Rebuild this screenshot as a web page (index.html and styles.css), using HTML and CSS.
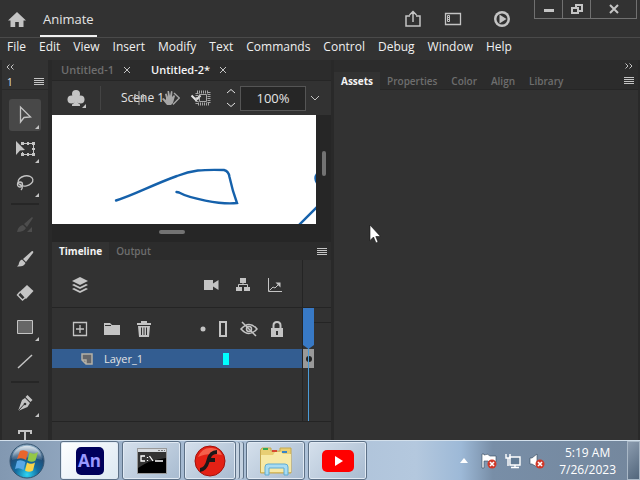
FILE: index.html
```html
<!DOCTYPE html>
<html lang="en">
<head>
    <meta charset="UTF-8">
    <meta name="viewport" content="width=device-width, initial-scale=1.0">
    <title>Animate</title>
    <link rel="stylesheet" href="styles.css">
</head>
<body>
    <header class="titlebar">
        <button class="home" aria-label="Home">
            <svg width="18" height="16" viewBox="0 0 18 16"><path fill="currentColor" d="M9 0L18 8.5H15.5V15H10.8V10H7.2V15H2.5V8.5H0z"/></svg>
        </button>
        <h1 class="appName">Animate</h1>
        <div class="actions">
            <button aria-label="Share">
                <svg width="18" height="18" viewBox="0 0 18 18" fill="none" stroke="currentColor" stroke-width="1.5"><path d="M6 6H2V16H16V6H12M9 12V2M5.5 5L9 1.5L12.5 5"/></svg>
            </button>
            <button aria-label="Workspace">
                <svg width="18" height="14" viewBox="0 0 18 14" fill="none" stroke="currentColor"><path stroke-width="1.3" d="M1.500 1.500H16.500V12.500H1.500z"/><path d="M3.500 3.500H5.500V5.500H3.500zM3.500 5.500H5.500V7.500H3.500zM3.500 7.500H5.500V9.500H3.500z"/></svg>
            </button>
            <button class="play" aria-label="Test movie">
                <svg width="18" height="18" viewBox="0 0 18 18"><circle cx="9" cy="9" r="8" fill="currentColor"/><circle cx="9" cy="9" r="5.500" fill="#323232"/><path fill="currentColor" d="M6.500 4.500L13.500 9L6.500 13.500z"/></svg>
            </button>
        </div>
        <div class="winButtons">
            <button aria-label="Minimize"><svg width="12" height="12" viewBox="0 0 12 12"><path fill="currentColor" d="M1 6H11V9H1z"/></svg></button>
            <button aria-label="Restore"><svg width="12" height="12" viewBox="0 0 12 12" fill="none" stroke="currentColor" stroke-width="2"><path d="M5 4V2H11V8H8M1 5H7V10H1z"/></svg></button>
            <button class="close" aria-label="Close"><svg width="12" height="12" viewBox="0 0 12 12" fill="none" stroke="currentColor" stroke-width="2"><path d="M2 2L10 10M10 2L2 10"/></svg></button>
        </div>
    </header>
    <nav class="menu">
        <a href="#">File</a>
        <a href="#">Edit</a>
        <a href="#">View</a>
        <a href="#">Insert</a>
        <a href="#">Modify</a>
        <a href="#">Text</a>
        <a href="#">Commands</a>
        <a href="#">Control</a>
        <a href="#">Debug</a>
        <a href="#">Window</a>
        <a href="#">Help</a>
    </nav>
    <main class="workspace">
        <aside class="tools">
            <button class="collapse" aria-label="Collapse tools"><svg width="8" height="6" viewBox="0 0 8 6" fill="none" stroke="currentColor"><path d="M3.500 0.500L1 3L3.500 5.500M7.500 0.500L5 3L7.500 5.500"/></svg></button>
            <div class="toolsHead">
                <span>1</span>
                <button class="lines" aria-label="Tools menu"></button>
            </div>
            <div class="toolList">
                <button class="tool more active" aria-label="Selection">
                    <svg width="20" height="20" viewBox="0 0 20 20" fill="none" stroke="currentColor" stroke-width="1.300"><path d="M5.500 2V17L9 12.500L15.500 12z"/></svg>
                </button>
                <button class="tool more" aria-label="Free transform">
                    <svg width="20" height="20" viewBox="0 0 20 20"><path fill="none" stroke="currentColor" d="M7.500 4.500H18.500V15.500H7.500V13"/><path fill="currentColor" d="M1 2V16L5 11.500L10 11zM6 3H9V6H6zM12 3H14V6H12zM17 3H20V6H17zM17 9H20V11H17zM17 14H20V17H17zM12 14H14V17H12zM6 14H9V17H6z"/></svg>
                </button>
                <button class="tool more" aria-label="Lasso">
                    <svg width="20" height="20" viewBox="0 0 20 20" fill="none" stroke="currentColor" stroke-width="1.300"><ellipse cx="10.500" cy="8" rx="7.500" ry="5" transform="rotate(-12 10 8)"/><circle cx="5" cy="11.500" r="2.500"/><path d="M5 11Q9 14 6 17"/></svg>
                </button>
                <hr>
                <button class="tool off" aria-label="Fluid brush">
                    <svg width="20" height="20" viewBox="0 0 20 20" fill="currentColor"><path d="M17 2L18 3L12 12L9 9zM2 17Q3 11 8 10L11 13Q9 17 2 17zM12 17L17 12V17z"/></svg>
                </button>
                <button class="tool" aria-label="Brush">
                    <svg width="20" height="20" viewBox="0 0 20 20" fill="currentColor"><path d="M17 2Q19 2 18 4L11 13L8 10zM7 10.500L10.500 14Q9 18 2 17.500Q4 16 4 14Q4.500 11 7 10.500z"/></svg>
                </button>
                <button class="tool" aria-label="Eraser">
                    <svg width="20" height="20" viewBox="0 0 20 20"><path fill="currentColor" d="M12 2L18.500 8L11 16L4.500 9z"/><path fill="none" stroke="currentColor" stroke-width="1.400" d="M5 9L2.500 12L7.500 17L11 14"/></svg>
                </button>
                <button class="tool more" aria-label="Rectangle">
                    <svg width="20" height="20" viewBox="0 0 20 20"><path fill="#666" stroke="currentColor" d="M2.500 3.500H17.500V16.500H2.500z"/></svg>
                </button>
                <button class="tool" aria-label="Line">
                    <svg width="20" height="20" viewBox="0 0 20 20" stroke="currentColor" stroke-width="1.500"><path d="M3 17L17 4"/></svg>
                </button>
                <hr>
                <button class="tool more" aria-label="Pen">
                    <svg width="20" height="20" viewBox="0 0 20 20"><path fill="currentColor" d="M12.500 2L17.500 7L15.500 9L10.500 4zM10 5L15 10L12.500 14L3 18L7 7z"/><path stroke="#323232" fill="none" d="M3 18L9.500 11"/><circle cx="10" cy="11" r="1.300" fill="#323232"/></svg>
                </button>
                <button class="tool" aria-label="Text">
                    <svg width="20" height="20" viewBox="0 0 20 20" fill="currentColor"><path d="M3 3H17V7H15V5H11V16H9V5H5V7H3z"/></svg>
                </button>
            </div>
        </aside>
        <section class="document">
            <div class="fileTabs">
                <a href="#">Untitled-1</a>
                <button aria-label="Close Untitled-1"><svg width="8" height="8" viewBox="0 0 8 8" stroke="currentColor"><path d="M1 1L7 7M7 1L1 7"/></svg></button>
                <a href="#" class="current">Untitled-2*</a>
                <button aria-label="Close Untitled-2"><svg width="8" height="8" viewBox="0 0 8 8" stroke="currentColor"><path d="M1 1L7 7M7 1L1 7"/></svg></button>
            </div>
            <div class="editBar">
                <button class="symbols more" aria-label="Edit symbols">
                    <svg width="18" height="18" viewBox="0 0 18 18" fill="currentColor"><circle cx="9" cy="5" r="4"/><circle cx="4.500" cy="10.500" r="4"/><circle cx="13.500" cy="10.500" r="4"/><path d="M8 7H10Q9.500 14 13 15.500V17H5V15.500Q8.500 14 8 7z"/></svg>
                </button>
                <div class="scene">
                    <select aria-label="Scene"><option>Scene 1</option></select>
                    <svg class="chevron" width="12" height="8" viewBox="0 0 12 8" fill="none" stroke="currentColor" stroke-width="2"><path d="M1.500 1.500L6 6L10.500 1.500"/></svg>
                    <div class="stageIcons">
                        <button aria-label="Center stage"><svg width="16" height="16" viewBox="0 0 16 16" fill="none" stroke="currentColor"><path d="M8 1V15M1 8H15M5 4.500H3.500V11.500H5M11 4.500H12.500V11.500H11"/></svg></button>
                        <button aria-label="Rotate stage"><svg width="18" height="18" viewBox="0 0 18 18"><path fill="currentColor" d="M4 9L3 5L4.500 4.500L6 8L5.500 2H7L8 7L9 2L10.500 2.500L10 8L12 6L13 7L11 14L9 16H5L0 10L1.500 9L4 11z"/><path fill="none" stroke="currentColor" stroke-width="1.300" d="M12 4L17.300 9L11 15.500"/></svg></button>
                        <button aria-label="Clip content"><svg width="16" height="16" viewBox="0 0 16 16" fill="none" stroke="currentColor"><path stroke-width="3" stroke-dasharray="1 1" d="M2 2H14V14H2z"/><path d="M4.500 4.500H11.500V11.500H4.500z"/></svg></button>
                    </div>
                </div>
                <div class="zoom">
                    <svg width="10" height="20" viewBox="0 0 10 20" fill="none" stroke="currentColor"><path d="M1 5L5 1.500L9 5M1 15L5 18.500L9 15"/></svg>
                    <input type="text" value="100%" aria-label="Zoom">
                    <button aria-label="Zoom levels"><svg width="10" height="6" viewBox="0 0 10 6" fill="none" stroke="currentColor"><path d="M1 1L5 5L9 1"/></svg></button>
                </div>
            </div>
            <div class="pasteboard">
                <svg class="stage" viewBox="0 0 264 109" preserveAspectRatio="xMinYMin slice" fill="none" stroke="#1561ab" stroke-width="2.400" stroke-linecap="round">
                    <path d="M64 85.500C82 80 100 70 125 61C140 55 150 54.500 172 55C176 56 177 58 177.500 62L181 76L185 88C168 90 137 83 127 77.500L124.500 77"/>
                    <path d="M247 110L266 91M265 59Q262 63 265 68"/>
                </svg>
                <div class="track vertical"><span></span></div>
                <div class="track horizontal"><span></span></div>
            </div>
            <section class="timeline">
                <div class="panelTabs">
                    <a href="#" class="current">Timeline</a>
                    <a href="#">Output</a>
                    <button class="lines" aria-label="Timeline menu"></button>
                </div>
                <div class="timelineBody">
                    <div class="layers">
                        <div class="layerBar top">
                            <button aria-label="Layers view"><svg width="16" height="18" viewBox="0 0 16 18" fill="currentColor"><path d="M8 1L16 5L8 9L0 5z"/><path d="M2 8L8 11L14 8L16 9L8 13L0 9zM2 12L8 15L14 12L16 13L8 17L0 13z"/></svg></button>
                            <div class="group">
                                <button aria-label="Camera"><svg width="16" height="12" viewBox="0 0 16 12" fill="currentColor"><path d="M1 1H10V4.500L15.500 1V11L10 7.500V11H1z"/></svg></button>
                                <button aria-label="Parenting view"><svg width="16" height="16" viewBox="0 0 16 16"><path fill="currentColor" d="M5 1H11V6H5zM1 10H7V14H1zM9 10H15V14H9z"/><path fill="none" stroke="currentColor" d="M8 5V8M3.500 11V7.500H12.500V11"/></svg></button>
                                <button aria-label="Graph"><svg width="16" height="16" viewBox="0 0 16 16"><path fill="none" stroke="currentColor" d="M1.500 1V14.500H15M2.500 13.500L6 10L8 11L12 7"/><path fill="currentColor" d="M8.500 5.500H13.500V10.500z"/></svg></button>
                            </div>
                        </div>
                        <div class="layerBar">
                            <div class="group left">
                                <button aria-label="New layer"><svg width="16" height="16" viewBox="0 0 16 16" fill="none" stroke="currentColor" stroke-width="1.3"><path d="M1.500 1.500H14.500V14.500H1.500zM8 4V12M4 8H12"/></svg></button>
                                <button aria-label="New folder"><svg width="16" height="14" viewBox="0 0 16 14" fill="currentColor"><path d="M0 1H6L8 3H16V13H0z"/><path d="M1 3.500H7" stroke="#323232"/></svg></button>
                                <button aria-label="Delete"><svg width="16" height="18" viewBox="0 0 16 18"><path fill="currentColor" d="M1 3H15V5H1zM2 6H14L13 17H3zM5 1H11V3H5z"/><path stroke="#323232" d="M5.500 7.500V15M8 7.500V15M10.500 7.500V15"/></svg></button>
                            </div>
                            <div class="group right">
                                <button aria-label="Highlight"><svg width="6" height="6" viewBox="0 0 6 6"><circle cx="3" cy="3" r="2.500" fill="currentColor"/></svg></button>
                                <button aria-label="Outline"><svg width="8" height="16" viewBox="0 0 8 16" fill="none" stroke="currentColor" stroke-width="2"><path d="M1 1H7V15H1z"/></svg></button>
                                <button aria-label="Hide"><svg width="18" height="16" viewBox="0 0 18 16" fill="none" stroke="currentColor" stroke-width="1.500"><path d="M1 8Q9 -1 17 8Q9 17 1 8zM2 1L16 15"/><circle cx="9" cy="8" r="2.500"/></svg></button>
                                <button aria-label="Lock"><svg width="12" height="16" viewBox="0 0 12 16"><path fill="currentColor" d="M0 7H12V16H0z"/><path fill="none" stroke="currentColor" stroke-width="2" d="M2.500 8V4.500Q2.500 1 6 1T9.500 4.500V8"/><path fill="#323232" d="M5 10H7V14H5z"/></svg></button>
                            </div>
                        </div>
                        <div class="layer">
                            <svg width="12" height="12" viewBox="0 0 12 12" fill="#66676a" stroke="#b5b1a6" stroke-width="1.500"><path d="M1 1H11V11H5L1 7zM1 7H5V11"/></svg>
                            <span class="name">Layer_1</span>
                            <span class="swatch"></span>
                        </div>
                    </div>
                    <div class="frames">
                        <div class="ruler"></div>
                        <div class="frameRow"><span class="keyframe"></span></div>
                        <div class="playhead"></div>
                    </div>
                </div>
            </section>
        </section>
        <section class="sidePanel">
            <div class="expand"><button aria-label="Expand panels"><svg width="8" height="6" viewBox="0 0 8 6" fill="none" stroke="currentColor"><path d="M0.500 0.500L3 3L0.500 5.500M4.500 0.500L7 3L4.500 5.500"/></svg></button></div>
            <div class="panelTabs">
                <a href="#" class="current">Assets</a>
                <a href="#">Properties</a>
                <a href="#">Color</a>
                <a href="#">Align</a>
                <a href="#">Library</a>
                <button class="lines" aria-label="Panel menu"></button>
            </div>
            <div class="panelBody"></div>
        </section>
    </main>
    <footer class="taskbar">
        <button class="start" aria-label="Start">
            <svg width="36" height="36" viewBox="0 0 36 36">
                <defs>
                    <radialGradient id="orb" cx=".5" cy=".9" r=".85"><stop offset="0" stop-color="#2ed5f2"/><stop offset=".4" stop-color="#126ca0"/><stop offset=".75" stop-color="#214b74"/><stop offset="1" stop-color="#8dacc5"/></radialGradient>
                    <linearGradient id="shine" x2="0" y2="1"><stop offset="0" stop-color="#fff" stop-opacity=".7"/><stop offset="1" stop-color="#fff" stop-opacity=".1"/></linearGradient>
                </defs>
                <circle cx="18" cy="18" r="17" fill="url(#orb)" stroke="#34536f"/>
                <path fill="url(#shine)" d="M3 17C3 -2 33 -2 33 17Q18 12 3 17z"/>
                <path fill="#e9652c" d="M11 8Q15 6 19 9L17 17Q13 14 8 16z"/>
                <path fill="#94c747" d="M20.500 9.500Q25 12 29 9L26.500 17.500Q23 20 18.500 17.500z"/>
                <path fill="#5aa8e5" d="M8 18Q12 16 16.500 19L14.500 27Q10 24 6 26z"/>
                <path fill="#f8d34a" d="M18 19.500Q22 22 26 19.500L24 27.500Q20 30 16 27.500z"/>
            </svg>
        </button>
        <div class="apps">
            <button class="app open" aria-label="Animate"><span class="an">An</span></button>
            <button class="app" aria-label="Command prompt">
                <svg width="30" height="26" viewBox="0 0 30 26"><path fill="#000" stroke="#999" d="M.5 .5H29.500V25.500H.5z"/><path fill="#d5d9dd" d="M1 1H29V4H1z"/><path fill="#777" d="M21 2H23V3H21zM24 2H26V3H24zM27 2H28V3H27z"/><path fill="#333" d="M1 4H29V10Q12 12 1 20z"/><path fill="none" stroke="#fff" stroke-width="1.300" d="M8 8H4V13H8M10.500 9V10M10.500 12V13M12.500 8L16 13M18 13H26"/></svg>
            </button>
            <button class="app stack" aria-label="Flash Player">
                <svg width="32" height="32" viewBox="0 0 32 32"><circle cx="16" cy="16" r="15" fill="#e32115" stroke="#a31009"/><path fill="#f4604b" d="M4 12Q8 2 18 3Q26 4 28 10Q14 7 4 12z"/><path fill="#1d1818" d="M23 5V9Q18 9 17 13H21V17H15.500Q13 26 6 27V23Q11 22 12.500 15Q15 5 23 5z"/></svg>
            </button>
            <button class="app" aria-label="Explorer">
                <svg width="34" height="30" viewBox="0 0 34 30"><path fill="#e8ce74" stroke="#c6a84f" d="M1.500 4V27H32V2H21V5H12V2H3z"/><path fill="#f7e9a6" d="M2 9H14L16 6H22L24 8H32V26H2z"/><path fill="#35a853" d="M4 2H9V4H4z"/><path fill="#d64a32" d="M13 4H18V6H13z"/><path fill="#3984c6" d="M23 5H28V7H23z"/><path fill="#a8dcf2" stroke="#5eabd3" d="M6 29V21Q6 18 9 18H26Q29 18 29 21V29H25V22H10V29z"/></svg>
            </button>
            <button class="app" aria-label="YouTube">
                <svg width="32" height="22" viewBox="0 0 32 22"><rect width="32" height="22" rx="5" fill="#f00"/><path fill="#fff" d="M13 6L21 11L13 16z"/></svg>
            </button>
        </div>
        <div class="tray">
            <button aria-label="Show hidden icons"><svg width="8" height="5" viewBox="0 0 8 5"><path fill="#fff" d="M4 0L8 5H0z"/></svg></button>
            <svg width="16" height="16" viewBox="0 0 16 16"><path fill="#fff" stroke="#34475b" stroke-width=".6" d="M1 1H3V2Q7 0 9 3H15V9H8L7 8H3V15H1z"/><circle cx="11" cy="11" r="4.500" fill="#d03728"/><path stroke="#fff" stroke-width="1.600" d="M9 9L13 13M13 9L9 13"/></svg>
            <svg width="16" height="16" viewBox="0 0 16 16"><path fill="#627b94" stroke="#fff" stroke-width="1.400" d="M5 4H15V12H5z"/><path fill="none" stroke="#fff" stroke-width="1.400" d="M10 12V14M6 14.500H14M1 1V5H5V1M3 5V13"/></svg>
            <svg width="16" height="16" viewBox="0 0 16 16"><path fill="#fff" stroke="#34475b" stroke-width=".6" d="M1 5H3L8 1V14L3 11H1z"/><circle cx="11" cy="11" r="4.500" fill="#d03728"/><path stroke="#fff" stroke-width="1.600" d="M9 9L13 13M13 9L9 13"/></svg>
        </div>
        <div class="clock"><time>5:19 AM</time><time>7/26/2023</time></div>
        <button class="desktop" aria-label="Show desktop"></button>
    </footer>
    <svg class="cursor" width="12" height="20" viewBox="0 0 12 20"><path fill="#fff" stroke="#111" stroke-width=".6" d="M1 1V16.500L4.500 13L7 19L9 18L6.800 12.500H11.500z"/></svg>
</body>
</html>
```

FILE: styles.css
```css
* {
    box-sizing: border-box;
}
html,
body,
h1,
hr {
    margin: 0;
    padding: 0;
}
body {
    display: flex;
    flex-direction: column;
    height: 100vh;
    overflow: hidden;
    background-color: #323232;
    color: #e4e4e4;
    font: 12px/16px "Open Sans", "Noto Sans", sans-serif;
}
a {
    color: inherit;
    text-decoration: none;
}
button {
    display: flex;
    align-items: center;
    justify-content: center;
    border: none;
    padding: 0;
    background: none;
    color: #c4c4c4;
}
svg {
    display: block;
    flex: none;
}

/* title bar */
.titlebar {
    display: flex;
    flex: none;
    height: 38px;
    border-bottom: 1px solid #4a4a4a;
}
.home {
    width: 34px;
    padding-top: 2px;
}
.appName {
    margin-left: 6px;
    padding: 0 3px;
    border-bottom: 2px solid #f0f0f0;
    font-size: 13px;
    font-weight: normal;
    line-height: 38px;
    height: 37px;
}
.actions {
    display: flex;
    align-items: center;
    gap: 22px;
    margin-left: auto;
}
.play {
    margin-left: 9px;
}
.winButtons {
    display: flex;
    height: 19px;
    margin: 0 3px 0 23px;
    border: 1px solid #707070;
    border-top: none;
}
.winButtons button {
    width: 28px;
    border-right: 1px solid #707070;
}
.winButtons .close {
    width: 45px;
    border: none;
}

.menu {
    display: flex;
    flex: none;
    gap: 13px;
    height: 22px;
    padding: 1px 7px;
    color: #f0f0f0;
}

/* workspace */
.workspace {
    display: flex;
    flex: 1;
    min-height: 0;
}
.tools {
    width: 52px;
    border-right: 4px solid #292929;
    border-left: 2px solid #292929;
    overflow: hidden;
}
.collapse {
    width: 16px;
    height: 14px;
}
.toolsHead {
    display: flex;
    align-items: center;
    justify-content: space-between;
    height: 16px;
    padding: 0 4px 0 5px;
    border-bottom: 1px solid #292929;
    font-size: 10px;
}
.lines {
    width: 10px;
    height: 7px;
    background: repeating-linear-gradient(#c4c4c4 0 1px, transparent 1px 2px);
}
.toolList {
    display: flex;
    flex-direction: column;
    align-items: center;
    gap: 2px;
    padding-top: 9px;
}
.tool {
    flex: none;
    width: 32px;
    height: 32px;
    border-radius: 3px;
}
.tool.active {
    background-color: #484848;
}
.tool.off {
    color: #4d4d4d;
}
.more {
    position: relative;
}
.more::after {
    content: "";
    position: absolute;
    right: 2px;
    bottom: 2px;
    border: 2px solid transparent;
    border-right-color: currentColor;
    border-bottom-color: currentColor;
}
.toolList hr {
    width: 28px;
    height: 6px;
    border: solid transparent;
    border-width: 2px 0;
    background: #262626 padding-box;
}

/* document */
.document {
    display: flex;
    flex-direction: column;
    width: 282px;
    border-right: 3px solid #292929;
}
.fileTabs {
    display: flex;
    align-items: center;
    gap: 9px;
    height: 21px;
    padding-left: 9px;
    background-color: #2c2c2c;
    border-bottom: 1px solid #262626;
    color: #6e6e6e;
    font-size: 11px;
    font-weight: 600;
}
.fileTabs .current {
    margin-left: 11px;
}
.current {
    color: #f4f4f4;
}
.editBar {
    display: flex;
    align-items: center;
    height: 34px;
}
.symbols {
    width: 49px;
    height: 24px;
    border-right: 1px solid #444;
}
.symbols.more::after {
    right: 14px;
}
.scene {
    display: flex;
    align-items: center;
    position: relative;
    margin-left: 20px;
}
.scene select {
    width: 69px;
    border: none;
    padding: 0;
    appearance: none;
    background: none;
    color: #e4e4e4;
    font: inherit;
}
/* the stage buttons run over the scene name when the bar is narrow */
.stageIcons {
    display: flex;
    justify-content: space-between;
    align-items: center;
    position: absolute;
    left: 10px;
    width: 80px;
    opacity: .8;
}
.zoom {
    display: flex;
    align-items: center;
    gap: 4px;
    margin-left: auto;
    padding-right: 11px;
}
.zoom input {
    width: 66px;
    height: 25px;
    border: 1px solid #555;
    background-color: #262626;
    color: #e4e4e4;
    font: inherit;
    font-size: 13px;
    text-align: center;
}
.pasteboard {
    display: grid;
    grid-template-columns: 1fr 15px;
    grid-template-rows: 109px 18px;
    background-color: #262626;
}
.stage {
    width: 100%;
    height: 100%;
    background-color: #fff;
}
.track {
    display: flex;
    justify-content: center;
}
.track span {
    border-radius: 2px;
    background-color: #737373;
}
.vertical span {
    width: 4px;
    height: 25px;
    margin-top: 36px;
}
.horizontal span {
    width: 26px;
    height: 4px;
    margin: 6px 24px 0 0;
}

/* panels */
.panelTabs {
    display: flex;
    flex: none;
    align-items: center;
    height: 18px;
    padding-right: 4px;
    background-color: #2c2c2c;
    color: #6e6e6e;
    font-size: 10px;
    font-weight: 600;
}
.panelTabs a {
    padding: 0 7px;
    line-height: 18px;
}
.panelTabs .current {
    background-color: #323232;
    font-weight: bold;
}
.panelTabs .lines {
    margin-left: auto;
}
.timeline {
    display: flex;
    flex-direction: column;
    flex: 1;
}
.timelineBody {
    display: flex;
    flex: 1;
    margin-bottom: 18px;
    border-bottom: 1px solid #242424;
}
.layers {
    flex: 1;
    border-right: 1px solid #242424;
}
.layerBar {
    display: flex;
    align-items: center;
    justify-content: space-between;
    height: 41px;
    padding: 0 19px 0 20px;
}
.layerBar.top {
    height: 48px;
    padding-top: 2px;
    border-bottom: 1px solid #242424;
}
.group {
    display: flex;
    align-items: center;
    gap: 16px;
}
.group.right {
    gap: 13px;
}
.layer {
    display: flex;
    align-items: center;
    height: 19px;
    padding: 0 73px 0 29px;
    background-color: #335d91;
    font-size: 11px;
}
.layer .name {
    margin-left: 11px;
}
.swatch {
    width: 6px;
    height: 12px;
    margin-left: auto;
    background-color: #0ff;
}
.frames {
    position: relative;
    width: 28px;
}
.ruler {
    height: 89px;
    background:
        linear-gradient(#242424, #242424) 0 47px / 100% 1px no-repeat,
        linear-gradient(#242424, #242424) 0 62px / 100% 1px no-repeat;
}
.frameRow {
    height: 19px;
}
.keyframe {
    display: flex;
    align-items: center;
    justify-content: center;
    width: 11px;
    height: 19px;
    background-color: #999;
}
.keyframe::after {
    content: "";
    width: 6px;
    height: 6px;
    border-radius: 50%;
    background-color: #222;
}
.playhead {
    position: absolute;
    top: 48px;
    bottom: 0;
    left: 0;
    width: 11px;
    background: linear-gradient(#4b9cd8, #4b9cd8) center / 1px 100% no-repeat;
}
.playhead::before {
    content: "";
    display: block;
    height: 41px;
    background-color: #3879c5;
    clip-path: polygon(0 0, 100% 0, 100% 90%, 50% 100%, 0 90%);
}
.sidePanel {
    display: flex;
    flex-direction: column;
    flex: 1;
    border-right: 2px solid #292929;
}
.expand {
    display: flex;
    justify-content: flex-end;
    align-items: center;
    height: 12px;
    padding-right: 5px;
    background-color: #2c2c2c;
}
.sidePanel .panelTabs {
    border-bottom: 1px solid #262626;
}
.panelBody {
    flex: 1;
}

/* taskbar */
.taskbar {
    display: flex;
    flex: none;
    height: 40px;
    border-top: 1px solid #d3e0ec;
    background: linear-gradient(90deg, #8298b1, #a3b8d0 25%, #b4c8de 65%, #9db9d7 72%, #788ea7 77%, #74879d);
}
.start {
    width: 54px;
}
.apps {
    display: flex;
    gap: 3px;
    margin-left: 6px;
}
.app {
    width: 59px;
    border: 1px solid #5d7187;
    border-radius: 3px;
    box-shadow: inset 0 0 0 1px #e1eaf4;
    background: linear-gradient(135deg, #d5e0ec, #a8bbd0);
}
.app.open {
    background: linear-gradient(135deg, #fff, #dce8f2);
}
/* several windows grouped under one icon */
.app.stack {
    width: 52px;
    margin-right: 7px;
    box-shadow: inset 0 0 0 1px #e1eaf4, 4px 0 0 -1px #c3d1e0, 5px 0 0 -1px #5d7187, 8px 0 0 -1px #c3d1e0, 9px 0 0 -1px #5d7187;
}
.an {
    width: 28px;
    height: 28px;
    border-radius: 5px;
    background-color: #00005b;
    color: #9999ff;
    font: bold 17px/27px "Open Sans", sans-serif;
}
.tray {
    display: flex;
    align-items: center;
    gap: 8px;
    margin-left: auto;
    padding-right: 14px;
}
.tray button {
    margin-right: 5px;
}
.clock {
    display: flex;
    flex-direction: column;
    justify-content: center;
    gap: 1px;
    padding: 2px 11px 0 0;
    color: #fff;
    text-align: center;
}
.desktop {
    width: 13px;
    border: 1px solid #a9b8c7;
    background: linear-gradient(135deg, #8c9caf, #52667c);
}

.cursor {
    position: absolute;
    top: 224px;
    left: 369px;
}
```
